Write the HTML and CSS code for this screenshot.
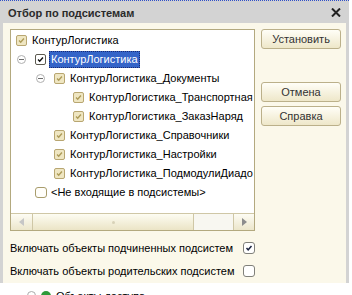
FILE: index.html
```html
<!DOCTYPE html>
<html>
<head>
    <title>Отбор по подсистемам</title>
    <link rel="stylesheet" href="styles.css">
</head>
<body>
    <div class="window">
        <div class="titlebar">
            <span>Отбор по подсистемам</span>
            <svg class="close" width="10" height="9" viewBox="0 0 10 9">
                <path d="M1 0.5 L9 8.5 M9 0.5 L1 8.5" stroke="#222" stroke-width="2"/>
            </svg>
        </div>
        <div class="dialog">
            <div class="main">
                <div class="tree">
                    <div class="tree-items">
                        <div class="row">
                            <span class="cb part"><svg viewBox="0 0 11 11"><path d="M2.5 5.5 L4.5 7.5 L8.5 3"/></svg></span>
                            <span class="label">КонтурЛогистика</span>
                        </div>
                        <div class="row">
                            <span class="toggle"><i></i></span>
                            <span class="cb on"><svg viewBox="0 0 11 11"><path d="M2.5 5.5 L4.5 7.5 L8.5 3"/></svg></span>
                            <span class="label selected">КонтурЛогистика</span>
                        </div>
                        <div class="row lvl2">
                            <span class="toggle"><i></i></span>
                            <span class="cb part"><svg viewBox="0 0 11 11"><path d="M2.5 5.5 L4.5 7.5 L8.5 3"/></svg></span>
                            <span class="label">КонтурЛогистика_Документы</span>
                        </div>
                        <div class="row lvl3">
                            <span class="toggle"></span>
                            <span class="cb part"><svg viewBox="0 0 11 11"><path d="M2.5 5.5 L4.5 7.5 L8.5 3"/></svg></span>
                            <span class="label">КонтурЛогистика_Транспортная</span>
                        </div>
                        <div class="row lvl3">
                            <span class="toggle"></span>
                            <span class="cb part"><svg viewBox="0 0 11 11"><path d="M2.5 5.5 L4.5 7.5 L8.5 3"/></svg></span>
                            <span class="label">КонтурЛогистика_ЗаказНаряд</span>
                        </div>
                        <div class="row lvl2">
                            <span class="toggle"></span>
                            <span class="cb part"><svg viewBox="0 0 11 11"><path d="M2.5 5.5 L4.5 7.5 L8.5 3"/></svg></span>
                            <span class="label">КонтурЛогистика_Справочники</span>
                        </div>
                        <div class="row lvl2">
                            <span class="toggle"></span>
                            <span class="cb part"><svg viewBox="0 0 11 11"><path d="M2.5 5.5 L4.5 7.5 L8.5 3"/></svg></span>
                            <span class="label">КонтурЛогистика_Настройки</span>
                        </div>
                        <div class="row lvl2">
                            <span class="toggle"></span>
                            <span class="cb part"><svg viewBox="0 0 11 11"><path d="M2.5 5.5 L4.5 7.5 L8.5 3"/></svg></span>
                            <span class="label">КонтурЛогистика_ПодмодулиДиадо</span>
                        </div>
                        <div class="row">
                            <span class="toggle"></span>
                            <span class="cb off"></span>
                            <span class="label">&lt;Не входящие в подсистемы&gt;</span>
                        </div>
                    </div>
                    <div class="hscroll">
                        <div class="sb-btn left"><span class="arrow-left"></span></div>
                        <div class="sb-thumb"><span class="grip"></span></div>
                        <div class="sb-track"></div>
                        <div class="sb-btn right"><span class="arrow-right"></span></div>
                    </div>
                </div>
                <div class="buttons">
                    <button type="button" class="btn">Установить</button>
                    <button type="button" class="btn cancel">Отмена</button>
                    <button type="button" class="btn">Справка</button>
                </div>
            </div>
            <div class="options">
                <span>Включать объекты подчиненных подсистем</span>
                <span class="opt-cb"><svg viewBox="0 0 12 12"><path d="M3 6 L5 8.2 L9 3.5"/></svg></span>
                <span>Включать объекты родительских подсистем</span>
                <span class="opt-cb"></span>
            </div>
        </div>
    </div>
    <div class="behind">
        <span class="b-toggle"></span>
        <span class="b-icon"></span>
        <span>Объекты доступа</span>
    </div>
</body>
</html>
```

FILE: styles.css
```css
body {
  margin: 0;
  background-color: #fff;
  font-family: "Liberation Sans", Arial, sans-serif;
  font-size: 11px;
  color: #000;
}
.window {
  width: 349px;
  background-color: #d3d3d3;
  border-top: 1px dotted #3050c8;
}
.titlebar {
  height: 22px;
  display: flex;
  align-items: center;
  justify-content: space-between;
  padding: 1px 8px 0 8px;
  box-sizing: border-box;
  font-weight: bold;
  font-size: 11px;
  color: #2a2a2a;
}
.close {
  display: block;
}
.dialog {
  height: 260px;
  margin: 0 3px 5px 3px;
  padding: 6px 5px 0 7px;
  background-color: #fbf8ea;
  box-sizing: border-box;
}
.main {
  display: flex;
  gap: 6px;
}
.tree {
  width: 245px;
  height: 202px;
  border: 1px solid #b3a97f;
  background: #fff;
  box-sizing: border-box;
  display: flex;
  flex-direction: column;
}
.tree-items {
  flex: 1;
  overflow: hidden;
  padding: 1px 0 0 5px;
}
.row {
  height: 19px;
  display: flex;
  align-items: center;
  white-space: nowrap;
}
.row.lvl2 {
  padding-left: 19px;
}
.row.lvl3 {
  padding-left: 38px;
}
.toggle {
  width: 19px;
  flex: none;
  display: flex;
  align-items: center;
}
.toggle i {
  display: block;
  width: 9px;
  height: 9px;
  margin-left: 1px;
  border: 1px solid #b0b0b0;
  border-radius: 50%;
  box-sizing: border-box;
  position: relative;
}
.toggle i::after {
  content: "";
  position: absolute;
  left: 1px;
  top: 3px;
  width: 5px;
  height: 1px;
  background: #6c6c6c;
}
.cb {
  flex: none;
  width: 11px;
  height: 11px;
  margin-right: 5px;
  box-sizing: border-box;
  border: 1px solid #b8a671;
  border-radius: 2px;
  background: #efe6c2;
}
.cb svg {
  display: block;
  width: 9px;
  height: 9px;
}
.cb svg path {
  fill: none;
  stroke: #ad9b58;
  stroke-width: 1.7;
}
.cb.on {
  border-color: #5c5a50;
  background: #fff;
}
.cb.on svg path {
  stroke: #111;
}
.cb.off {
  width: 12px;
  height: 11px;
  margin-right: 4px;
  border-color: #a89c6c;
  border-radius: 3px;
  background: #fffefa;
}
.label {
  line-height: 17px;
}
.label.selected {
  margin-left: -2px;
  padding: 0 2px;
  background-color: #3464c8;
  color: #fff;
  outline: 1px dotted #1a2a70;
  outline-offset: -1px;
}
.hscroll {
  height: 16px;
  flex: none;
  display: flex;
  border-top: 1px solid #cfc7a6;
}
.sb-btn {
  width: 20px;
  display: flex;
  align-items: center;
  justify-content: center;
  background: linear-gradient(#fdfcf4, #ece6cb);
}
.sb-btn.left {
  width: 21px;
  border-right: 1px solid #cfc7a6;
}
.sb-btn.right {
  border-left: 1px solid #cfc7a6;
}
.arrow-left {
  border-top: 4px solid transparent;
  border-bottom: 4px solid transparent;
  border-right: 5px solid #c6c6c6;
}
.arrow-right {
  border-top: 4px solid transparent;
  border-bottom: 4px solid transparent;
  border-left: 5px solid #8c8c8c;
}
.sb-thumb {
  width: 160px;
  display: flex;
  align-items: center;
  justify-content: center;
  background: linear-gradient(#fdfcf2, #ebe4c6);
  border-right: 1px solid #cfc7a6;
}
.grip {
  width: 3px;
  height: 3px;
  border-radius: 50%;
  background: #d8d2b8;
}
.sb-track {
  flex: 1;
  background: #f8f7f1;
}
.buttons {
  display: flex;
  flex-direction: column;
  width: 80px;
}
.btn {
  height: 20px;
  margin-bottom: 4px;
  padding: 0;
  font-family: "Liberation Sans", Arial, sans-serif;
  font-size: 11px;
  color: #333;
  border: 1px solid #bbb08a;
  border-radius: 3px;
  background: linear-gradient(#fffef7, #eee7c9);
}
.btn.cancel {
  margin-top: 29px;
}
.options {
  display: grid;
  grid-template-columns: 233px 12px;
  grid-auto-rows: 23px;
  align-items: center;
  margin: 5px 0 0 0;
  white-space: nowrap;
}
.opt-cb {
  width: 12px;
  height: 12px;
  box-sizing: border-box;
  border: 1px solid #80807a;
  border-radius: 3px;
  background: #fff;
}
.opt-cb svg {
  display: block;
  width: 10px;
  height: 10px;
}
.opt-cb svg path {
  fill: none;
  stroke: #1c2440;
  stroke-width: 1.7;
}
.behind {
  height: 7px;
  display: flex;
  align-items: flex-start;
  gap: 5px;
  padding: 2px 0 0 27px;
  overflow: hidden;
  font-size: 11px;
  line-height: 12px;
}
.b-toggle {
  width: 9px;
  height: 9px;
  margin-top: 1px;
  border: 1px solid #aaa;
  border-radius: 50%;
  box-sizing: border-box;
}
.b-icon {
  width: 10px;
  height: 10px;
  margin-top: 1px;
  border-radius: 50%;
  background: #2e9a3a;
}
```
